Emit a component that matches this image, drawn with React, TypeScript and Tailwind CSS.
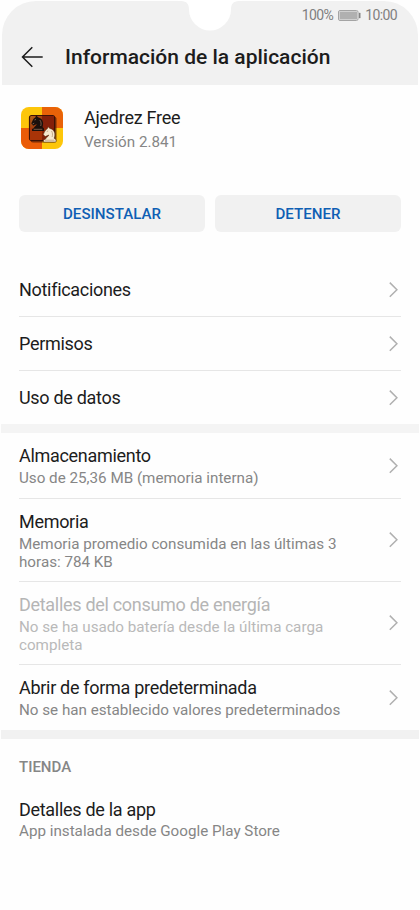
import React from 'react'

interface Row {
  title: string
  description?: string
  height: string
  disabled?: boolean
}

const generalRows: Row[] = [
  { title: 'Notificaciones', height: 'h-[54px]' },
  { title: 'Permisos', height: 'h-[54px]' },
  { title: 'Uso de datos', height: 'h-[53px]' },
]

const usageRows: Row[] = [
  { title: 'Almacenamiento', description: 'Uso de 25,36 MB (memoria interna)', height: 'h-[66px]' },
  { title: 'Memoria', description: 'Memoria promedio consumida en las últimas 3 horas: 784 KB', height: 'h-[83px]' },
  {
    title: 'Detalles del consumo de energía',
    description: 'No se ha usado batería desde la última carga completa',
    height: 'h-[83px]',
    disabled: true,
  },
  { title: 'Abrir de forma predeterminada', description: 'No se han establecido valores predeterminados', height: 'h-[65px]' },
]

const Chevron = () => (
  <svg className="w-[9px] h-[16px] mr-[3px] shrink-0" viewBox="0 0 9 16" fill="none" stroke="#b0b0b0" strokeWidth="1.5">
    <path d="M0.8 0.6 L7.9 7.7 L0.8 14.8" />
  </svg>
)

const SettingRow = ({ row, last }: { row: Row; last: boolean }) => (
  <div className={`mx-[19px] flex items-center justify-between ${row.height} ${last ? '' : 'border-b border-[#e6e6e6]'}`}>
    <div className="w-[334px] pt-px">
      <h2 className={`text-[18px] leading-[22px] tracking-[-0.3px] ${row.disabled ? 'text-[#b5b5b5]' : 'text-[#1c1c1c]'}`}>
        {row.title}
      </h2>
      {row.description && (
        <p className={`mt-[2px] text-[15.2px] leading-[18px] ${row.disabled ? 'text-[#b9b9b9]' : 'text-[#868686]'}`}>
          {row.description}
        </p>
      )}
    </div>
    <Chevron />
  </div>
)

const AppIcon = () => (
  <svg className="w-[42px] h-[42px] rounded-[8px]" viewBox="0 0 42 42">
    <defs>
      <linearGradient id="board" x1="0" y1="0" x2="1" y2="1">
        <stop offset="0" stopColor="#b8661c" />
        <stop offset=".5" stopColor="#922606" />
        <stop offset="1" stopColor="#6e1704" />
      </linearGradient>
    </defs>
    <rect width="42" height="42" fill="#fdc60a" />
    <rect x="21" width="21" height="21" fill="#e96208" />
    <rect y="21" width="21" height="21" fill="#ea5c08" />
    <rect x="9.500" y="9.500" width="26" height="26" rx="2.500" fill="#4a1805" opacity="0.7" />
    <rect x="8.500" y="8.500" width="25" height="25" rx="2" fill="url(#board)" stroke="#3d1206" strokeWidth="1.200" />
    <path d="M21 9h12v12H21z" fill="#84200a" />
    <path d="M9 21h12v12H9z" fill="#a93408" />
    <path d="M11 24h12v-2.500l-1.500-1.500c1.500-4 .5-8.500-4.500-9.800l-1.800-2-.9 2.300c-2.300 1.100-2.900 3.600-4 6l1.900 2.300 3.600-1.900c-.5 1.800-2.700 2.600-3.200 4.300l-1.600.8z" fill="#1a100c" />
    <path d="M13.600 13l1.400-.6M11.600 17l1.600-.8M12.700 22.300h8.600M18.800 13c1.600 2 1.500 4 .9 6" fill="none" stroke="#b98d70" strokeWidth=".6" />
    <path d="M22.500 35h12.500v-2.300l-1.800-1.500c1.500-4 .7-8.700-4.500-9.800l-1.500-1.600-.9 2c-2.200 1.100-3 3.600-4 5.800l1.900 2 3.600-1.600c-.5 1.800-2.700 2.400-3.400 4.200l-1.900.8z" fill="#f6e8ce" stroke="#523019" strokeWidth=".5" />
    <path d="M24 33.200h9.500M25.800 24.500l1.400-.5M30.500 24c1.300 2 1.200 4 .6 6" fill="none" stroke="#a3845f" strokeWidth=".6" />
  </svg>
)

const Header = () => (
  <header className="relative mx-[2px] mt-px h-[84px] rounded-t-[34px] bg-[#f1f1f1]">
    {/* Camera notch */}
    <svg className="absolute left-[176px] -top-px w-[64px] h-[31px]" viewBox="0 -1 64 31">
      <path d="M0 -1v1h3c6 0 8 3.500 8 8.500a21 21 0 0 0 42 0c0-5 2-8.500 8-8.500h3v-1z" fill="#fff" />
    </svg>
    <div className="flex h-[28px] items-center justify-end pr-[21px] text-[14px] tracking-[-0.6px] text-[#808080]">
      <span>100%</span>
      <svg className="ml-[5px] mr-[4px] w-[23px] h-[11px]" viewBox="0 0 23 11">
        <rect x=".5" y=".5" width="19.500" height="10" rx="1.500" fill="#f1f1f1" stroke="#a4a4a4" />
        <rect x="1.500" y="1.500" width="17.500" height="8" fill="#b0b0b0" />
        <path d="M21.200 3h1v5h-1z" fill="#777" stroke="#777" strokeWidth=".4" />
      </svg>
      <span>10:00</span>
    </div>
    <div className="flex h-[56px] items-center pl-[19px]">
      <svg className="w-[23px] h-[22px]" viewBox="0 0 23 22" fill="none" stroke="#1c1c1c" strokeWidth="1.500">
        <path d="M21.700 11H1.500M11.300 1.200L1.500 11l9.800 9.800" />
      </svg>
      <h1 className="ml-[21px] pt-[2px] text-[21px] font-medium text-[#1c1c1c]">Información de la aplicación</h1>
    </div>
  </header>
)

const App = () => {
  return (
    <div className="h-[910px] w-[420px] overflow-hidden bg-[#fefefe] font-['Roboto',sans-serif]">
      <Header />

      {/* App summary */}
      <section className="flex h-[110px] pl-[21px] pt-[22px]">
        <AppIcon />
        <div className="ml-[21px]">
          <h2 className="text-[18px] leading-[22px] tracking-[-0.25px] text-[#1c1c1c]">Ajedrez Free</h2>
          <p className="mt-[4px] text-[15.2px] leading-[18px] text-[#868686]">Versión 2.841</p>
        </div>
      </section>

      {/* Actions */}
      <section className="flex gap-[10px] px-[19px]">
        {['DESINSTALAR', 'DETENER'].map((label) => (
          <button key={label} className="h-[37px] flex-1 rounded-[6px] bg-[#f1f1f1] pt-[2px] text-[15.1px] font-medium text-[#0f5fb4]">
            {label}
          </button>
        ))}
      </section>

      <section className="mt-[31px]">
        {generalRows.map((row, idx) => (
          <SettingRow key={row.title} row={row} last={idx === generalRows.length - 1} />
        ))}
      </section>
      <div className="mx-[1px] h-[9px] bg-[#f4f4f4]"></div>

      <section>
        {usageRows.map((row, idx) => (
          <SettingRow key={row.title} row={row} last={idx === usageRows.length - 1} />
        ))}
      </section>
      <div className="mx-[1px] h-[9px] bg-[#f1f1f1]"></div>

      {/* Store */}
      <section className="px-[19px] pt-[19px]">
        <h3 className="text-[15px] leading-[18px] font-medium text-[#868686]">TIENDA</h3>
        <h2 className="mt-[23px] text-[18px] leading-[22px] tracking-[-0.3px] text-[#1c1c1c]">Detalles de la app</h2>
        <p className="mt-px text-[15.2px] leading-[18px] text-[#868686]">App instalada desde Google Play Store</p>
      </section>
    </div>
  )
}

export default App
